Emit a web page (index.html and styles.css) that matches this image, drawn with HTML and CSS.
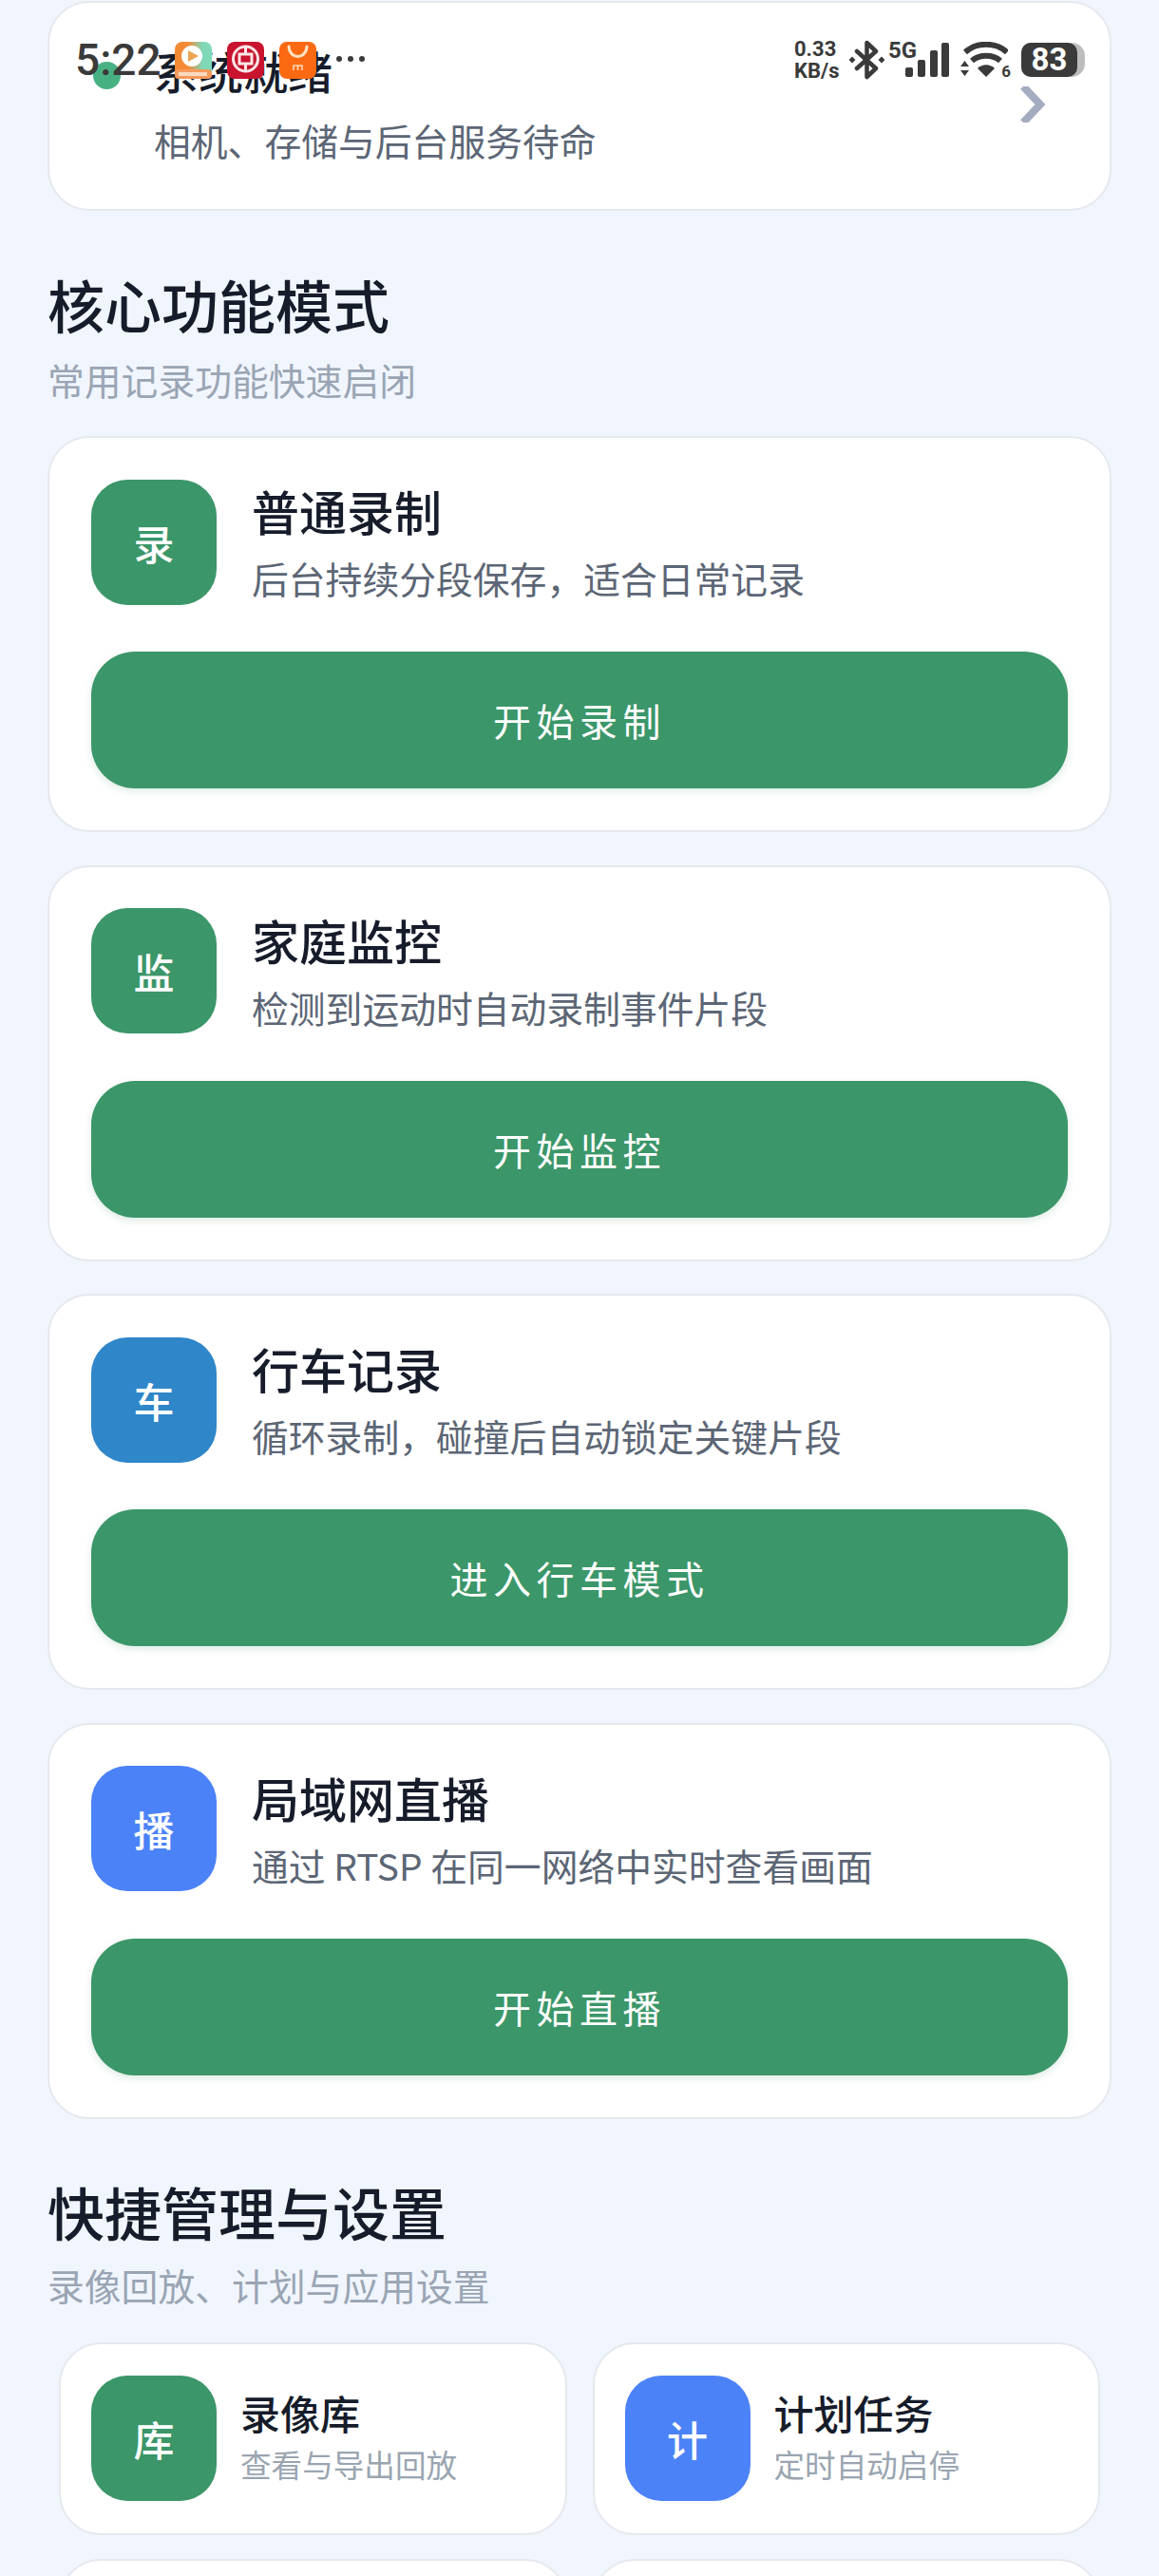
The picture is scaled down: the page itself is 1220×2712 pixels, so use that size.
FILE: index.html
```html
<!DOCTYPE html>
<html lang="zh-CN">
<head>
	<meta charset="UTF-8">
	<title>录制首页</title>
	<link rel="stylesheet" href="styles.css">
</head>
<body>
	<div class='status_bar'>
		<div class='status_left'>
			<span class='time'>5:22</span>
			<div class='app_icons'>
				<svg width="39" height="39" viewBox="0 0 39 39">
					<defs><linearGradient id="video_bg" x1="0" y1="0" x2="1" y2="0"><stop offset="0.35" stop-color="#f58a35"/><stop offset="0.75" stop-color="#7fd8b8"/></linearGradient></defs>
					<rect width="39" height="39" rx="8" fill="url(#video_bg)"/>
					<rect y="29" width="39" height="10" rx="4" fill="#f49a5c"/>
					<rect x="4" y="32" width="30" height="4" fill="#fbd9bf"/>
					<circle cx="18" cy="15" r="11" fill="#fff"/>
					<path d="M14 9 L25 15 L14 21 Z" fill="#e9a653"/>
				</svg>
				<svg width="39" height="39" viewBox="0 0 39 39">
					<rect width="39" height="39" rx="8" fill="#c8142f"/>
					<circle cx="19.5" cy="18" r="13" fill="none" stroke="#fbe6e6" stroke-width="3"/>
					<rect x="13" y="13" width="13" height="10" fill="none" stroke="#fbe6e6" stroke-width="3"/>
					<path d="M19.5 5 V13 M19.5 23 V31" stroke="#fbe6e6" stroke-width="3"/>
				</svg>
				<svg width="39" height="39" viewBox="0 0 39 39">
					<rect width="39" height="39" rx="8" fill="#fb6a12"/>
					<path d="M10 5 C11 19 28 19 29 5" fill="none" stroke="#ffe3c4" stroke-width="3" stroke-linecap="round"/>
					<path d="M15 30 V25 H24 V30 M19.5 25 V30" fill="none" stroke="#ffd9b8" stroke-width="1.6"/>
				</svg>
			</div>
			<div class='more_dots'><i></i><i></i><i></i></div>
		</div>
		<div class='status_right'>
			<div class='net_speed'>0.33<br>KB/s</div>
			<svg class='bluetooth' width="37" height="42" viewBox="0 0 37 42">
				<path d="M8 12 L28 30 L18.5 39 V3 L28 12 L8 30" fill="none" stroke="#3a3a3a" stroke-width="4.5" stroke-linejoin="round" stroke-linecap="round"/>
				<path d="M3 17.5 L6.5 21 L3 24.5 L-0.5 21 Z M34 17.5 L37.5 21 L34 24.5 L30.5 21 Z" fill="#3a3a3a"/>
			</svg>
			<div class='signal'>
				<span class='signal_type'>5G</span>
				<svg width="46" height="36" viewBox="0 0 46 36">
					<rect x="0" y="26" width="8" height="10" rx="2" fill="#3a3a3a"/>
					<rect x="13" y="18" width="8" height="18" rx="2" fill="#3a3a3a"/>
					<rect x="26" y="8" width="8" height="28" rx="2" fill="#3a3a3a"/>
					<rect x="38" y="0" width="8" height="36" rx="2" fill="#3a3a3a"/>
				</svg>
			</div>
			<div class='wifi'>
				<svg width="50" height="38" viewBox="0 0 50 38">
					<path d="M5 11 C17 0 37 0 49 11" fill="none" stroke="#3a3a3a" stroke-width="6"/>
					<path d="M12 20 C20 13 34 13 42 20" fill="none" stroke="#3a3a3a" stroke-width="6"/>
					<path d="M18 28 C23 23 31 23 36 28 L27 37 Z" fill="#3a3a3a"/>
					<path d="M0 26 L4.500 20 L9 26 Z M0 30 L9 30 L4.500 36 Z" fill="#3a3a3a"/>
				</svg>
				<span class='wifi_six'>6</span>
			</div>
			<div class='battery'><span class='battery_level'>83</span></div>
		</div>
	</div>

	<div class='page'>
		<div class='card ready_card'>
			<span class='ready_dot'></span>
			<div class='ready_text'>
				<p class='ready_title'>系统就绪</p>
				<p class='card_desc'>相机、存储与后台服务待命</p>
			</div>
			<svg class='arrow' width="26" height="38" viewBox="0 0 26 38">
				<path d="M3 0 L21 19 L3 38" fill="none" stroke="#a3acc0" stroke-width="8"/>
			</svg>
		</div>

		<div class='section_head'>
			<h2>核心功能模式</h2>
			<p>常用记录功能快速启闭</p>
		</div>

		<div class='mode_list'>
			<div class='card mode_card'>
				<div class='mode_info'>
					<div class='icon green'>录</div>
					<div class='mode_text'>
						<p class='card_title'>普通录制</p>
						<p class='card_desc'>后台持续分段保存，适合日常记录</p>
					</div>
				</div>
				<div class='action_btn'>开始录制</div>
			</div>
			<div class='card mode_card'>
				<div class='mode_info'>
					<div class='icon green'>监</div>
					<div class='mode_text'>
						<p class='card_title'>家庭监控</p>
						<p class='card_desc'>检测到运动时自动录制事件片段</p>
					</div>
				</div>
				<div class='action_btn'>开始监控</div>
			</div>
			<div class='card mode_card'>
				<div class='mode_info'>
					<div class='icon sky'>车</div>
					<div class='mode_text'>
						<p class='card_title'>行车记录</p>
						<p class='card_desc'>循环录制，碰撞后自动锁定关键片段</p>
					</div>
				</div>
				<div class='action_btn'>进入行车模式</div>
			</div>
			<div class='card mode_card'>
				<div class='mode_info'>
					<div class='icon blue'>播</div>
					<div class='mode_text'>
						<p class='card_title'>局域网直播</p>
						<p class='card_desc'>通过 RTSP 在同一网络中实时查看画面</p>
					</div>
				</div>
				<div class='action_btn'>开始直播</div>
			</div>
		</div>

		<div class='section_head second'>
			<h2>快捷管理与设置</h2>
			<p>录像回放、计划与应用设置</p>
		</div>

		<div class='quick_grid'>
			<div class='card quick_card'>
				<div class='icon green'>库</div>
				<div class='quick_text'>
					<p class='quick_title'>录像库</p>
					<p class='quick_desc'>查看与导出回放</p>
				</div>
			</div>
			<div class='card quick_card'>
				<div class='icon blue'>计</div>
				<div class='quick_text'>
					<p class='quick_title'>计划任务</p>
					<p class='quick_desc'>定时自动启停</p>
				</div>
			</div>
			<div class='card quick_card'></div>
			<div class='card quick_card'></div>
		</div>
	</div>
</body>
</html>
```

FILE: styles.css
```css
*{
	margin: 0;
	padding: 0;
	box-sizing: border-box;
}
html, body{
	height: 2712px;
	overflow: hidden;
}
body{
	position: relative;
	background: #f1f5fd;
	font-family: "Noto Sans CJK SC", "Noto Sans", sans-serif;
	color: #161c2a;
}

/* status bar lies over the scrolled page */
.status_bar{
	position: absolute;
	top: 41px;
	left: 79px;
	right: 78px;
	height: 44px;
	z-index: 2;
	display: flex;
	justify-content: space-between;
	align-items: center;
	color: #3a3a3a;
}
.status_left, .status_right{
	display: flex;
	align-items: center;
}
.time{
	font-family: Roboto, sans-serif;
	font-size: 46px;
	font-weight: 500;
	line-height: 44px;
	width: 105px;
}
.app_icons{
	display: flex;
	gap: 16px;
}
.more_dots{
	display: flex;
	gap: 6px;
	margin-left: 21px;
	margin-top: -2px;
}
.more_dots i{
	width: 6px;
	height: 6px;
	border-radius: 50%;
	background: #3a3a3a;
}
.net_speed{
	font-family: Roboto, sans-serif;
	font-size: 22px;
	font-weight: 700;
	line-height: 23px;
	width: 58px;
}
.signal{
	position: relative;
	margin-left: 22px;
	height: 36px;
}
.signal_type{
	position: absolute;
	top: -4px;
	left: -18px;
	font-family: Roboto, sans-serif;
	font-size: 24px;
	font-weight: 700;
	line-height: 24px;
}
.wifi{
	position: relative;
	margin-left: 12px;
	height: 38px;
}
.wifi_six{
	position: absolute;
	right: -3px;
	bottom: -1px;
	font-family: Roboto, sans-serif;
	font-size: 17px;
	font-weight: 700;
	line-height: 16px;
}
.battery{
	margin-left: 14px;
	width: 67px;
	height: 36px;
	border-radius: 10px 14px 14px 10px;
	background: #bdbdbd;
}
.battery_level{
	display: block;
	width: 59px;
	height: 36px;
	border-radius: 10px;
	background: #3a3a3a;
	color: #fff;
	text-align: center;
	font-family: Roboto, sans-serif;
	font-size: 33px;
	font-weight: 700;
	line-height: 36px;
}

.page{
	padding: 1px 50px 0;
}
.card{
	background: #fff;
	border: 2px solid #e5e8ee;
	border-radius: 44px;
}
.ready_card{
	height: 221px;
	display: flex;
	align-items: center;
	padding: 0 68px 0 46px;
}
.ready_dot{
	width: 29px;
	height: 29px;
	border-radius: 50%;
	background: #48b183;
	margin: -64px 35px 0 0;
}
.ready_text{
	flex: 1;
	margin-top: -7px;
}
.ready_title{
	font-size: 47px;
	font-weight: 500;
	line-height: 64px;
	margin-bottom: 13px;
}
.card_desc{
	font-size: 38.8px;
	line-height: 56px;
	color: #5c6675;
}
.arrow{
	margin-top: -4px;
}

.section_head{
	padding-top: 60px;
}
.section_head.second{
	padding-top: 59px;
}
.section_head h2{
	font-size: 60px;
	font-weight: 500;
	line-height: 76px;
}
.section_head p{
	font-size: 38.8px;
	line-height: 56px;
	margin-top: 13px;
	color: #9aa5b4;
}
.section_head.second p{
	margin-top: 11px;
}

.mode_list{
	display: flex;
	flex-direction: column;
	gap: 34.500px;
	margin-top: 32px;
}
.mode_card{
	height: 417px;
	padding: 43px 44px 0;
}
.mode_info{
	display: flex;
	align-items: center;
	gap: 37px;
}
.mode_text{
	padding-bottom: 1px;
}
.icon{
	flex: none;
	width: 132px;
	height: 132px;
	border-radius: 38px;
	display: flex;
	justify-content: center;
	align-items: center;
	color: #fff;
	font-size: 43px;
	font-weight: 500;
}
.green{
	background: #3b9669;
}
.sky{
	background: #2f86c9;
}
.blue{
	background: #4c82f7;
}
.card_title{
	font-size: 50px;
	font-weight: 500;
	line-height: 66px;
	margin-bottom: 10px;
}
.action_btn{
	height: 144px;
	margin-top: 49px;
	border-radius: 46px;
	background: #3b9669;
	box-shadow: 0 3px 8px rgba(60, 150, 105, 0.18);
	color: #fff;
	font-size: 40px;
	letter-spacing: 5.500px;
	line-height: 144px;
	text-align: center;
}

.quick_grid{
	display: grid;
	grid-template-columns: 1fr 1fr;
	gap: 25px 27px;
	margin-top: 33px;
	padding: 0 12px;
}
.quick_card{
	height: 203px;
	display: flex;
	align-items: center;
	gap: 25px;
	padding: 0 32px;
}
.quick_text{
	padding-bottom: 5px;
}
.quick_title{
	font-size: 42px;
	font-weight: 500;
	line-height: 58px;
	margin-bottom: 1px;
}
.quick_desc{
	font-size: 32.6px;
	line-height: 48px;
	color: #9aa5b1;
}
```
